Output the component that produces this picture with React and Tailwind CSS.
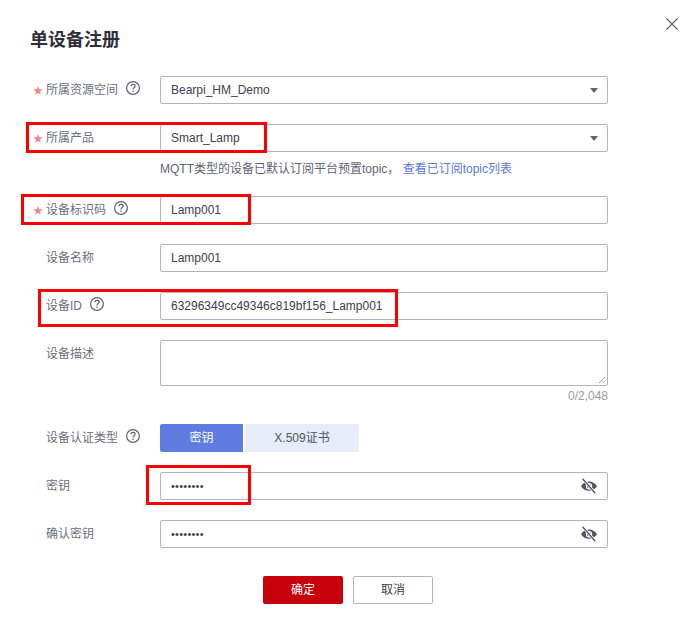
import React from 'react';
import { X } from 'lucide-react';

const HelpIcon = ({ className = '' }) => (
  <svg width="16" height="16" viewBox="0 0 16 16" fill="none" className={`shrink-0 text-[#5f6370] ${className}`}>
    <circle cx="8" cy="8" r="6.4" stroke="currentColor" strokeWidth="1.2" />
    <path d="M5.9 6.3c0-1.2.9-1.9 2.1-1.9s2.1.7 2.1 1.8c0 1.7-2.1 1.6-2.1 3.2" stroke="currentColor" strokeWidth="1.2" />
    <circle cx="8" cy="11.3" r=".8" fill="currentColor" />
  </svg>
);

const EyeOff = () => (
  <svg width="18" height="16" viewBox="0 0 18 16" className="absolute right-[9px] top-[5px] text-[#4f5464]">
    <path d="M1 8.2C3 5.2 5.8 3.6 9 3.6s6 1.6 8 4.6c-2 3-4.8 4.6-8 4.6s-6-1.6-8-4.6z" fill="currentColor" />
    <circle cx="9" cy="8.2" r="2.6" fill="none" stroke="#fff" strokeWidth="1.2" />
    <path d="M3 1l12 14" stroke="#fff" strokeWidth="3" />
    <path d="M2.6 .8l12.6 14.4" stroke="currentColor" strokeWidth="1.3" />
  </svg>
);

const Caret = () => (
  <span className="absolute right-[9px] top-[11px] w-0 h-0 border-l-[4px] border-r-[4px] border-t-[5px] border-l-transparent border-r-transparent border-t-[#5f6370]" />
);

const Label = ({ children, required, help, iconGap = 'ml-[7px]' }) => (
  <div className="w-[160px] h-[28px] flex items-center shrink-0 text-[#6b6f7c]">
    <span className={`w-[16px] ml-[30px] shrink-0 text-[10px] pl-[3px] ${required ? 'text-[#f08a8a]' : ''}`}>{required ? '★' : ''}</span>
    <span className="whitespace-nowrap">{children}</span>
    {help && <HelpIcon className={`${iconGap} -mt-[4px]`} />}
  </div>
);

const Field = ({ value, caret, eye, secret }) => (
  <div className={`relative w-[448px] h-[28px] border border-[#b3b3c0] rounded-[2px] pl-[10px] leading-[26px] text-[#3c4050] whitespace-nowrap ${secret ? 'text-[11px] tracking-[0.25px]' : ''}`}>
    {value}
    {caret && <Caret />}
    {eye && <EyeOff />}
  </div>
);

const Row = ({ label, required, help, iconGap, mt = 'mt-5', children }) => (
  <div className={`flex ${mt}`}>
    <Label required={required} help={help} iconGap={iconGap}>{label}</Label>
    {children}
  </div>
);

const RedBox = ({ className }) => (
  <div className={`absolute border-[3px] border-[#ff0000] pointer-events-none ${className}`} />
);

export default function App() {
  return (
    <div className="relative w-[690px] h-[630px] bg-white text-[12px] overflow-hidden" style={{ fontFamily: '"Liberation Sans", "Noto Sans CJK SC", sans-serif' }}>
      <X className="absolute top-[13px] right-[7px] text-[#5f6370]" size={22} strokeWidth={1.2} />
      <div className="pt-[28px]">
        <h1 className="pl-[30px] text-[18px] leading-[24px] font-bold text-[#2c2f3a]">单设备注册</h1>

        <Row label="所属资源空间" required help mt="mt-[24px]">
          <Field value="Bearpi_HM_Demo" caret />
        </Row>
        <Row label="所属产品" required>
          <Field value="Smart_Lamp" caret />
        </Row>
        <div className="pl-[160px] mt-[9px] h-[16px] leading-[16px] text-[#5f6370] whitespace-nowrap">
          MQTT类型的设备已默认订阅平台预置topic， <span className="text-[#5b78d8]">查看已订阅topic列表</span>
        </div>
        <Row label="设备标识码" required help mt="mt-[19px]">
          <Field value="Lamp001" />
        </Row>
        <Row label="设备名称">
          <Field value="Lamp001" />
        </Row>
        <Row label="设备ID" help>
          <Field value="63296349cc49346c819bf156_Lamp001" />
        </Row>
        <div className="flex mt-5">
          <Label>设备描述</Label>
          <div className="w-[448px]">
            <div className="relative h-[46px] border border-[#b3b3c0] rounded-[2px]">
              <svg width="8" height="8" viewBox="0 0 8 8" className="absolute right-[1px] bottom-[1px] text-[#9a9aa5]">
                <path d="M1 7l6-6M4.5 7l2.5-2.5" stroke="currentColor" strokeWidth="1" />
              </svg>
            </div>
            <div className="text-right text-[#9a9ca6] leading-[20px]">0/2,048</div>
          </div>
        </div>
        <div className="flex mt-[18px]">
          <Label help>设备认证类型</Label>
          <div className="flex gap-[2px]">
            <div className="w-[83px] h-[28px] leading-[28px] text-center bg-[#5f7de0] text-white rounded-l-[2px]">密钥</div>
            <div className="w-[114px] h-[28px] leading-[28px] text-center bg-[#e8ecf8] text-[#4f5464] rounded-r-[2px]">X.509证书</div>
          </div>
        </div>
        <Row label="密钥">
          <Field value="••••••••" eye secret />
        </Row>
        <Row label="确认密钥">
          <Field value="••••••••" eye secret />
        </Row>
        <div className="flex justify-center gap-[10px] mt-[28px] pl-[6px]">
          <button className="w-[80px] h-[28px] bg-[#c7000b] text-white rounded-[2px]">确定</button>
          <button className="w-[80px] h-[28px] border border-[#b3b3c0] text-[#3c4050] rounded-[2px]">取消</button>
        </div>
      </div>
      <RedBox className="left-[26px] top-[122px] w-[241px] h-[31px]" />
      <RedBox className="left-[21px] top-[194px] w-[230px] h-[31px]" />
      <RedBox className="left-[38px] top-[289px] w-[360px] h-[38px]" />
      <RedBox className="left-[146px] top-[465px] w-[105px] h-[40px]" />
    </div>
  );
}
